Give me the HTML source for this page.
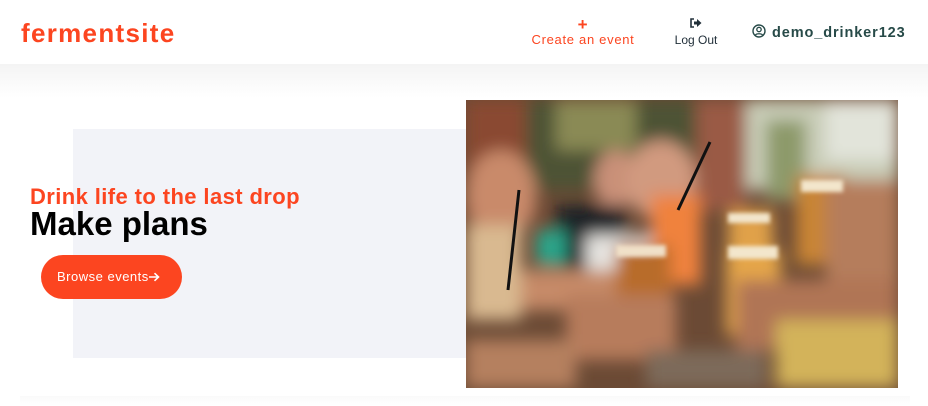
<!DOCTYPE html>
<html><head><style>
*{margin:0;padding:0;box-sizing:border-box}
body{width:928px;height:406px;overflow:hidden;background:#fff;font-family:"Liberation Sans",sans-serif;position:relative}
.hdr{position:absolute;left:0;top:0;width:928px;height:64px;background:#fff;z-index:2}
.shadow{position:absolute;left:0;top:64px;width:928px;height:34px;background:linear-gradient(#f4f4f4,#fff)}
.logo{position:absolute;left:21px;top:18px;font-size:26px;font-weight:bold;color:#fc4520;letter-spacing:1.3px}
.create{position:absolute;left:528px;top:18px;width:110px;text-align:center;color:#fc4520;font-size:13px;letter-spacing:0.7px}
.logout{position:absolute;left:672px;top:17px;width:48px;text-align:center;color:#22303a;font-size:12px}
.user{position:absolute;left:752px;top:24px;color:#274a48;font-size:14.5px;font-weight:bold;letter-spacing:0.9px}
.panel{position:absolute;left:73px;top:129px;width:393px;height:229px;background:#f2f3f8}
.sub{position:absolute;left:30px;top:184px;font-size:22px;font-weight:bold;color:#fc4520;letter-spacing:0.4px}
.h1{position:absolute;left:30px;top:205px;font-size:33px;font-weight:bold;color:#000}
.btn{position:absolute;left:41px;top:255px;width:141px;height:44px;border-radius:22px;background:#fc4520;color:#fff;font-size:13px;letter-spacing:0.5px;line-height:44px;padding-left:16px}
.photo{position:absolute;left:466px;top:100px;width:432px;height:288px;overflow:hidden}
.bshadow{position:absolute;left:20px;top:396px;width:890px;height:10px;background:linear-gradient(#fafafa,#fff)}
</style></head><body>
<div class="hdr">
<div class="logo">fermentsite</div>
<div class="create"><div style="font-size:17px;font-weight:bold;line-height:14px">+</div>Create an event</div>
<div class="logout"><svg width="12" height="10" viewBox="0 0 12 10"><path d="M4 1H1v8h3" stroke="#22303a" stroke-width="1.6" fill="none"/><path d="M4 3.5h3V1l4.5 4L7 9V6.5H4z" fill="#22303a"/></svg><div style="margin-top:2px">Log Out</div></div>
<div class="user"><svg width="14" height="14" viewBox="0 0 14 14" style="vertical-align:-1px;margin-right:6px"><circle cx="7" cy="7" r="6" fill="none" stroke="#274a48" stroke-width="1.4"/><circle cx="7" cy="5.5" r="2.2" fill="none" stroke="#274a48" stroke-width="1.3"/><path d="M3.3 11.2C4.5 9.3 9.5 9.3 10.7 11.2" fill="none" stroke="#274a48" stroke-width="1.3"/></svg>demo_drinker123</div>
</div>
<div class="shadow"></div>
<div class="panel"></div>
<div class="sub">Drink life to the last drop</div>
<div class="h1">Make plans</div>
<div class="btn">Browse events<svg width="11" height="10" viewBox="0 0 11 10" style="vertical-align:-1px"><path d="M0 5h9M5.5 1.2L9.5 5 5.5 8.8" stroke="#fff" stroke-width="1.6" fill="none"/></svg></div>
<div class="photo">
<svg width="432" height="288" viewBox="0 0 432 288">
<defs><filter id="b" x="-20%" y="-20%" width="140%" height="140%"><feGaussianBlur stdDeviation="8"/></filter><filter id="s"><feGaussianBlur stdDeviation="2"/></filter></defs>
<rect width="432" height="288" fill="#6b4a35"/>
<g filter="url(#b)">
<rect x="0" y="0" width="70" height="120" fill="#8a4a32"/>
<rect x="60" y="0" width="170" height="90" fill="#4e5235"/>
<rect x="90" y="0" width="80" height="50" fill="#8a8a55"/>
<rect x="230" y="0" width="50" height="110" fill="#9a5a45"/>
<rect x="280" y="0" width="152" height="90" fill="#c9cdb8"/>
<rect x="300" y="20" width="40" height="80" fill="#8d9a6a"/>
<rect x="360" y="0" width="72" height="60" fill="#e2e4da"/>
<ellipse cx="35" cy="95" rx="35" ry="45" fill="#c98a6a"/>
<ellipse cx="150" cy="80" rx="22" ry="30" fill="#c99078"/>
<ellipse cx="195" cy="80" rx="35" ry="40" fill="#d19a7f"/>
<rect x="90" y="105" width="70" height="70" fill="#1e2226"/>
<rect x="120" y="135" width="80" height="60" fill="#e6e4e0"/>
<rect x="70" y="130" width="30" height="35" fill="#2aa58a"/>
<rect x="0" y="170" width="170" height="40" fill="#c68a68"/>
<rect x="185" y="95" width="50" height="90" fill="#f0823e"/>
<rect x="150" y="145" width="55" height="65" fill="#b86c2c"/>
<rect x="262" y="110" width="45" height="40" fill="#e0a14a"/>
<rect x="260" y="150" width="55" height="85" fill="#e5a64a"/>
<rect x="330" y="75" width="50" height="90" fill="#c98536"/>
<rect x="360" y="80" width="72" height="120" fill="#b57d5c"/>
<rect x="0" y="125" width="55" height="95" fill="#d9b990"/>
<rect x="100" y="195" width="110" height="65" fill="#b77b5c"/>
<rect x="0" y="240" width="110" height="48" fill="#b5805e"/>
<rect x="270" y="180" width="162" height="70" fill="#b07455"/>
<rect x="310" y="220" width="122" height="68" fill="#d3b35a"/>
<rect x="180" y="250" width="120" height="38" fill="#7d6a5a"/>
</g>
<g filter="url(#s)">
<rect x="150" y="145" width="50" height="12" fill="#f0e0c8"/>
<rect x="262" y="113" width="42" height="10" fill="#f3e6cc"/>
<rect x="262" y="146" width="50" height="13" fill="#f3e6cc"/>
<rect x="335" y="80" width="42" height="12" fill="#f3e6cc"/>
</g>
<path d="M244 42L212 110" stroke="#111" stroke-width="3"/>
<path d="M53 90L42 190" stroke="#111" stroke-width="3"/>
</svg>
</div>
<div class="bshadow"></div>
</body></html>
